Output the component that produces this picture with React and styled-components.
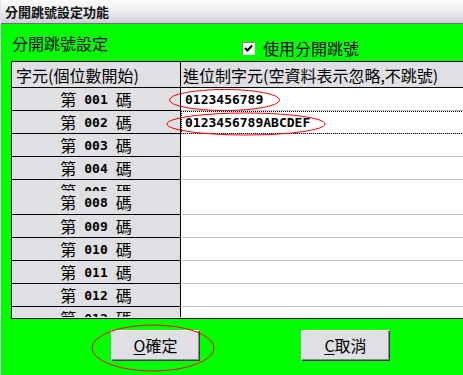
import React from "react";
import styled, { createGlobalStyle } from "styled-components";

const GlobalStyle = createGlobalStyle`
  html, body {
    margin: 0;
    padding: 0;
    overflow: hidden;
    background: #00ff00;
  }
  body {
    font-family: "Noto Sans CJK TC", "Noto Sans", sans-serif;
  }
`;

const Window = styled.div`
  position: relative;
  width: 463px;
  height: 375px;
  box-sizing: border-box;
  border-left: 1px solid #e4e4e4;
  background: #00ff00;
  overflow: hidden;
`;

const TitleBar = styled.div`
  height: 24px;
  box-sizing: border-box;
  padding-left: 4px;
  display: flex;
  align-items: center;
  background: linear-gradient(#fcfcfe, #eeeef2 45%, #cfcfd8);
  border-bottom: 1px solid #6f6f78;
  font-size: 13px;
  font-weight: bold;
  color: #111;
  letter-spacing: 0;
`;

const OptionRow = styled.div`
  height: 37px;
  box-sizing: border-box;
  padding: 11px 0 0 11px;
  display: grid;
  grid-template-columns: 230px auto;
  font-size: 16px;
  line-height: 16px;
  color: #000;
`;

const CheckLabel = styled.label`
  display: flex;
  align-items: center;
  gap: 8px;
`;

const CheckBox = styled.span`
  width: 11px;
  height: 11px;
  margin-top: 1px;
  background: #fff;
  border-top: 1px solid #808080;
  border-left: 1px solid #808080;
  border-right: 1px solid #f0f0f0;
  border-bottom: 1px solid #f0f0f0;
  display: flex;
  align-items: center;
  justify-content: center;
`;

const Table = styled.div`
  margin-left: 10px;
  width: 470px;
  border-top: 1px solid #000;
  border-left: 1px solid #000;
  border-bottom: 1px solid #000;
`;

const Body = styled.div`
  height: 255px;
  overflow: hidden;
  border-bottom: 1px solid #f2f2e4;
  display: grid;
  grid-template-columns: 169px 1fr;
  grid-auto-rows: min-content;
  background: #fff;
`;

const HeadCell = styled.div`
  height: 26px;
  box-sizing: border-box;
  background: #e0dfe3;
  border-bottom: 1px solid #000;
  border-right: ${(p) => (p.$fixed ? "1px solid #000" : "none")};
  box-shadow: ${(p) => (p.$fixed ? "inset 1px 0 #f4f4f6" : "none")};
  padding-left: ${(p) => (p.$fixed ? "4px" : "2px")};
  display: flex;
  align-items: center;
  font-size: 16px;
  white-space: nowrap;
  color: #000;
`;

const LabelCell = styled.div`
  height: ${(p) => p.$h}px;
  box-sizing: border-box;
  background: #e0dfe3;
  border-bottom: 1px solid #000;
  border-right: 1px solid #000;
  box-shadow: inset 1px 0 #f4f4f6;
  overflow: hidden;
`;

const LabelLine = styled.div`
  height: 22px;
  display: flex;
  align-items: center;
  justify-content: center;
  font-size: 16px;
  color: #000;
`;

const Clip = styled.div`
  height: ${(p) => p.$h}px;
  overflow: hidden;
`;

const Num = styled.span`
  font-family: "DejaVu Sans Mono", "Liberation Mono", monospace;
  font-weight: bold;
  font-size: 13px;
  margin: 0 8px;
`;

const DataCell = styled.div`
  height: ${(p) => p.$h}px;
  box-sizing: border-box;
  border-bottom: 1px solid #c0c0c0;
  padding-left: 4px;
  display: flex;
  align-items: center;
  font-family: "DejaVu Sans Mono", "Liberation Mono", monospace;
  font-weight: bold;
  font-size: 13px;
  color: #000;
  outline: ${(p) => (p.$focus ? "1px dotted #000" : "none")};
  outline-offset: -1px;
`;

const ButtonBar = styled.div`
  display: flex;
  gap: 101px;
  padding: 11px 0 0 110px;
`;

const Button = styled.button`
  width: 89px;
  height: 31px;
  box-sizing: border-box;
  padding: 0 0 1px;
  background: #e0dfe3;
  border-top: 1px solid #fff;
  border-left: 1px solid #fff;
  border-right: 1px solid #404040;
  border-bottom: 1px solid #404040;
  box-shadow: inset -1px -1px #8a8a8e;
  font-family: "Noto Sans CJK TC", "Noto Sans", sans-serif;
  font-size: 16px;
  color: #000;
  display: flex;
  align-items: center;
  justify-content: center;
`;

const Key = styled.span`
  text-decoration: underline;
  text-underline-offset: 2px;
`;

const Marks = styled.svg`
  position: absolute;
  left: -1px;
  top: 0;
  pointer-events: none;
`;

const rows = [
  { n: "001", v: "0123456789" },
  { n: "002", v: "0123456789ABCDEF", focus: true },
  { n: "003" },
  { n: "004" },
  { n: "008", ghost: "005", h: 34 },
  { n: "009" },
  { n: "010" },
  { n: "011" },
  { n: "012" },
  { n: "013" },
];

const Label = ({ n }) => (
  <LabelLine>
    第<Num>{n}</Num>碼
  </LabelLine>
);

export default function App() {
  return (
    <Window>
      <GlobalStyle />
      <TitleBar>分開跳號設定功能</TitleBar>
      <OptionRow>
        <span>分開跳號設定</span>
        <CheckLabel>
          <CheckBox>
            <svg width="9" height="9" viewBox="0 0 9 9">
              <path d="M1 4 L3.5 6.5 L8 1.5" fill="none" stroke="#000" strokeWidth="2" />
            </svg>
          </CheckBox>
          使用分開跳號
        </CheckLabel>
      </OptionRow>
      <Table>
        <Body>
          <HeadCell $fixed>字元(個位數開始)</HeadCell>
          <HeadCell>進位制字元(空資料表示忽略,不跳號)</HeadCell>
          {rows.map((r) => {
            const h = (r.h || 22) + 1;
            return (
              <React.Fragment key={r.n}>
                <LabelCell $h={h}>
                  {r.ghost && (
                    <Clip $h={11}>
                      <Label n={r.ghost} />
                    </Clip>
                  )}
                  <Label n={r.n} />
                </LabelCell>
                <DataCell $h={h} $focus={r.focus}>
                  {r.v}
                </DataCell>
              </React.Fragment>
            );
          })}
        </Body>
      </Table>
      <ButtonBar>
        <Button>
          <Key>O</Key>確定
        </Button>
        <Button>
          <Key>C</Key>取消
        </Button>
      </ButtonBar>
      <Marks width="463" height="375">
        <ellipse cx="224.5" cy="100" rx="55" ry="10.5" fill="none" stroke="#ff0000" strokeWidth="1" />
        <ellipse cx="246" cy="124" rx="79" ry="11" fill="none" stroke="#ff0000" strokeWidth="1" />
        <ellipse cx="153" cy="348" rx="61" ry="23" fill="none" stroke="#ff0000" strokeWidth="1" />
      </Marks>
    </Window>
  );
}
